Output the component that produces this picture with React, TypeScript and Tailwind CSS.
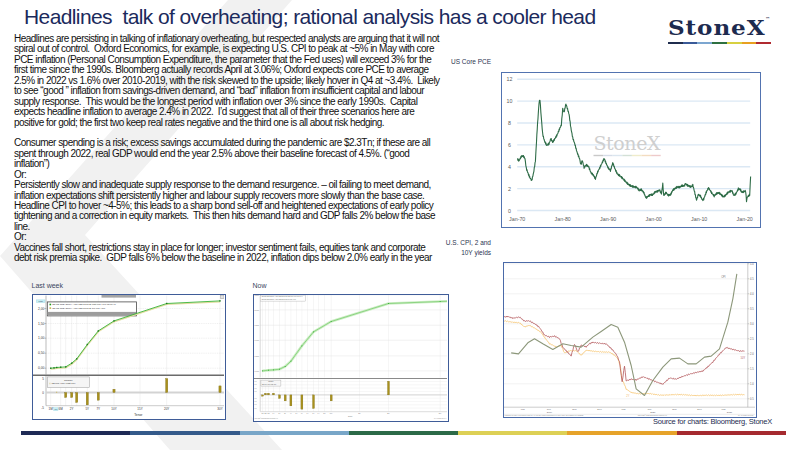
import React from "react";

const P1 = [
  "Headlines are persisting in talking of inflationary overheating, but respected analysts are arguing that it will not",
  "spiral out of control.  Oxford Economics, for example, is expecting U.S. CPI to peak at ~5% in May with core",
  "PCE inflation (Personal Consumption Expenditure, the parameter that the Fed uses) will exceed 3% for the",
  "first time since the 1990s. Bloomberg actually records April at 3.06%; Oxford expects core PCE to average",
  "2.5% in 2022 vs 1.6% over 2010-2019, with the risk skewed to the upside; likely hover in Q4 at ~3.4%.  Likely",
  "to see \u201cgood \u201d inflation from savings-driven demand, and \u201cbad\u201d inflation from insufficient capital and labour",
  "supply response.  This would be the longest period with inflation over 3% since the early 1990s.  Capital",
  "expects headline inflation to average 2.4% in 2022.  I\u2019d suggest that all of their three scenarios here are",
  "positive for gold; the first two keep real rates negative and the third one is all about risk hedging.",
  "",
  "Consumer spending is a risk; excess savings accumulated during the pandemic are $2.3Tn; if these are all",
  "spent through 2022, real GDP would end the year 2.5% above their baseline forecast of 4.5%. (\u201cgood",
  "inflation\u201d)",
  "Or:",
  "Persistently slow and inadequate supply response to the demand resurgence. \u2013 oil failing to meet demand,",
  "inflation expectations shift persistently higher and labour supply recovers more slowly than the base case.",
  "Headline CPI to hover ~4-5%; this leads to a sharp bond sell-off and heightened expectations of early policy",
  "tightening and a correction in equity markets.  This then hits demand hard and GDP falls 2% below the base",
  "line.",
  "Or:",
  "Vaccines fall short, restrictions stay in place for longer; investor sentiment fails, equities tank and corporate",
  "debt risk premia spike.  GDP falls 6% below the baseline in 2022, inflation dips below 2.0% early in the year",
];

// interpolate between key points and add a little deterministic noise
function jag(pts: number[][], step: number, amp: number, seed = 1) {
  const out: string[] = [];
  let k = 0;
  for (let i = 0; i < pts.length - 1; i++) {
    const [x0, y0] = pts[i];
    const [x1, y1] = pts[i + 1];
    const n = Math.max(1, Math.round(Math.abs(x1 - x0) / step));
    for (let j = 0; j < n; j++) {
      const t = j / n;
      const d = amp * (Math.sin(k * 2.7 + seed) + 0.6 * Math.sin(k * 6.1 + seed * 2));
      out.push(`${(x0 + (x1 - x0) * t).toFixed(2)},${(y0 + (y1 - y0) * t + d).toFixed(2)}`);
      k++;
    }
  }
  const last = pts[pts.length - 1];
  out.push(`${last[0]},${last[1]}`);
  return out.join(" ");
}

const PCE: number[][] = [
  [1970, 4.7], [1970.4, 4.5], [1970.9, 4.9], [1971.3, 5.0], [1971.7, 4.8], [1972.0, 3.9], [1972.5, 3.3],
  [1972.9, 2.9], [1973.2, 2.7], [1973.6, 3.4], [1974.0, 4.5], [1974.4, 7.5], [1974.8, 9.9], [1975.0, 10.2],
  [1975.3, 8.5], [1975.6, 7.0], [1976.0, 6.3], [1976.5, 5.9], [1977.0, 6.1], [1977.4, 6.6], [1977.8, 6.3],
  [1978.3, 6.6], [1978.8, 6.9], [1979.3, 7.4], [1979.7, 7.8], [1980.0, 9.3], [1980.3, 9.0], [1980.7, 9.8],
  [1981.0, 9.4], [1981.4, 8.8], [1981.8, 7.5], [1982.2, 6.6], [1982.7, 6.0], [1983.2, 5.3], [1983.7, 4.8],
  [1984.0, 4.2], [1984.3, 4.6], [1984.7, 3.9], [1985.2, 4.1], [1985.7, 4.0], [1986.2, 3.5], [1986.7, 3.3],
  [1987.2, 2.9], [1987.6, 3.4], [1988.2, 3.9], [1988.7, 4.4], [1989.1, 4.8], [1989.5, 4.4], [1990.0, 3.9],
  [1990.5, 3.6], [1991.0, 4.3], [1991.5, 3.8], [1992.0, 3.4], [1992.6, 3.2], [1993.2, 2.9], [1993.8, 2.6],
  [1994.4, 2.4], [1995.0, 2.3], [1995.6, 2.2], [1996.2, 2.1], [1996.8, 1.8], [1997.3, 1.9], [1997.8, 1.7],
  [1998.3, 1.2], [1998.8, 1.3], [1999.3, 1.4], [1999.8, 1.4], [2000.3, 1.7], [2000.8, 1.8], [2001.3, 1.9],
  [2001.7, 1.5], [2002.0, 2.4], [2002.2, 1.3], [2002.7, 1.6], [2003.2, 1.4], [2003.7, 1.5], [2004.2, 1.9],
  [2004.7, 2.0], [2005.2, 2.1], [2005.7, 2.1], [2006.2, 2.3], [2006.7, 2.3], [2007.0, 2.5], [2007.4, 2.3],
  [2007.8, 2.2], [2008.2, 2.1], [2008.6, 2.3], [2009.0, 1.7], [2009.4, 1.0], [2009.8, 1.5], [2010.3, 1.3],
  [2010.7, 0.9], [2011.0, 1.0], [2011.5, 1.6], [2012.0, 2.1], [2012.4, 1.9], [2012.8, 1.6], [2013.3, 1.3],
  [2013.8, 1.5], [2014.3, 1.6], [2014.8, 1.5], [2015.3, 1.3], [2015.8, 1.4], [2016.3, 1.6], [2016.8, 1.7],
  [2017.2, 1.8], [2017.6, 1.4], [2018.1, 1.6], [2018.6, 2.0], [2019.0, 1.9], [2019.4, 1.6], [2019.8, 1.7],
  [2020.2, 1.8], [2020.4, 0.9], [2020.6, 1.3], [2020.9, 1.4], [2021.1, 1.5], [2021.3, 3.1],
];

const pceLine = jag(
  PCE.map(([yr, v]) => [16.7 + (yr - 1970) * 4.55, 139 - v * 10.94]),
  0.4,
  0.9,
  3
);

function PceChart() {
  const ys = [12, 10, 8, 6, 4, 2, 0];
  const xl = ["Jan-70", "Jan-80", "Jan-90", "Jan-00", "Jan-10", "Jan-20"];
  const stripe = ["#c9c9c9", "#d6dde8", "#dbe6ef", "#d3e0d6", "#efeccb", "#f3dcc0", "#eecaca"];
  return (
    <svg width="257" height="153" viewBox="1.5 1.5 257 153" className="block">
      {ys.map((v) => (
        <g key={v}>
          <line x1="16.7" x2="249.7" y1={139 - v * 10.94} y2={139 - v * 10.94} stroke="#dbe8f4" strokeWidth="1.4" />
          <text x="9" y={141 - v * 10.94} fontSize="5.3" fill="#5a5a5a" textAnchor="middle" fontFamily="Liberation Sans">{v}</text>
        </g>
      ))}
      {xl.map((l, i) => (
        <text key={l} x={16.7 + i * 45.5} y="149.5" fontSize="5.3" fill="#5a5a5a" textAnchor="middle" fontFamily="Liberation Sans">{l}</text>
      ))}
      <text x="93" y="78" fontSize="19" fill="#cfcfcf" textLength="67" fontFamily="DejaVu Serif">StoneX</text>
      {stripe.map((c, i) => (
        <rect key={i} x={93 + i * 9.6} y="83.3" width="9.6" height="1.4" fill={c} />
      ))}
      <polyline points={pceLine} fill="none" stroke="#2e6c47" strokeWidth="1.1" strokeLinejoin="round" />
    </svg>
  );
}

const cv = (p: number[][]) => p.map(([X, Y]) => [X / 3 - 3, Y / 3 - 6]);

const CPI = cv([[35,292],[57,295],[85,262],[105,250],[130,265],[160,282],[190,265],[215,270],[245,275],[280,245],[305,228],[335,207],[355,215],[375,260],[395,330],[410,400],[435,420],[460,375],[490,335],[515,310],[540,308],[565,325],[590,325],[615,305],[635,302],[660,280],[685,200],[700,130],[712,55]]);
const TEN = cv([[0,190],[10,185],[25,182],[40,187],[60,185],[75,198],[90,197],[110,207],[120,215],[135,238],[150,245],[165,243],[180,250],[190,275],[205,290],[215,300],[225,265],[235,290],[245,270],[260,275],[270,265],[280,260],[300,262],[320,265],[340,285],[352,300],[360,320],[368,380],[375,330],[380,375],[395,370],[410,373],[430,365],[445,370],[460,375],[490,385],[510,368],[530,372],[550,363],[570,355],[590,350],[610,347],[625,335],[640,320],[660,295],[680,275],[700,282],[720,288],[735,287]]);
const TWO = cv([[0,205],[10,195],[30,198],[60,202],[75,215],[90,210],[110,220],[125,230],[135,245],[150,265],[170,275],[185,270],[195,292],[210,285],[230,285],[245,300],[260,285],[280,287],[300,288],[330,290],[345,300],[355,310],[362,330],[368,375],[372,380],[380,400],[395,410],[420,415],[450,415],[480,418],[520,418],[560,418],[600,420],[640,420],[680,418],[710,418],[735,418]]);

function CpiChart() {
  const grid = [0, 1, 2, 3, 4, 5, 6, 7, 8, 9];
  const vals = ["5.0", "4.5", "4.0", "3.5", "3.0", "2.5", "2.0", "1.5", "1.0", "0.5"];
  const months = [[20.3, "Mar"], [46.3, "Jun"], [72, "Sep"], [97, "Dec"], [121, "Mar"], [147, "Jun"], [172, "Sep"], [197, "Dec"], [221, "Mar"]] as const;
  return (
    <svg width="251" height="153" viewBox="1.5 1.5 251 153" className="block">
      {grid.map((k) => (
        <g key={k}>
          <line x1="0" x2="245.3" y1={2.3 + k * 15} y2={2.3 + k * 15} stroke="#e4e4e4" strokeWidth="0.5" />
          <line x1="245.3" x2="246.8" y1={2.3 + k * 15} y2={2.3 + k * 15} stroke="#888" strokeWidth="0.4" />
          <text x="247.5" y={3.3 + k * 15} fontSize="2.6" fill="#666" fontFamily="Liberation Sans">{vals[k]}</text>
        </g>
      ))}
      <line x1="245.3" x2="245.3" y1="0" y2="145.7" stroke="#999" strokeWidth="0.5" />
      <line x1="0" x2="253" y1="145.7" y2="145.7" stroke="#999" strokeWidth="0.5" />
      {months.map(([x, m], i) => (
        <text key={i} x={x} y="148.8" fontSize="2.4" fill="#666" textAnchor="middle" fontFamily="Liberation Sans">{m}</text>
      ))}
      <text x="47" y="151.6" fontSize="2.4" fill="#666" textAnchor="middle" fontFamily="Liberation Sans">2019</text>
      <text x="150.3" y="151.6" fontSize="2.4" fill="#666" textAnchor="middle" fontFamily="Liberation Sans">2020</text>
      <text x="227" y="151.6" fontSize="2.4" fill="#666" textAnchor="middle" fontFamily="Liberation Sans">2021</text>
      <line x1="0" x2="253" y1="152.8" y2="152.8" stroke="#bbb" strokeWidth="0.3" />
      <text x="2" y="154.6" fontSize="1.6" fill="#888" fontFamily="Liberation Sans">USGG10YR Index (US Generic Govt 10 Yr) US CPI Urban Consumers YoY NSA Daily 02APR2019-06APR2021</text>
      <text x="150" y="154.6" fontSize="1.6" fill="#888" textAnchor="middle" fontFamily="Liberation Sans">Copyright© 2021 Bloomberg Finance L.P.</text>
      <text x="251" y="154.6" fontSize="1.6" fill="#888" textAnchor="end" fontFamily="Liberation Sans">06-Apr-2021 08:01:51</text>
      <polyline points={jag(TWO, 0.9, 0.45, 5)} fill="none" stroke="#f6c46e" strokeWidth="0.8" strokeLinejoin="round" />
      <polyline points={jag(TEN, 0.9, 0.6, 2)} fill="none" stroke="#b4585c" strokeWidth="0.8" strokeLinejoin="round" />
      <polyline points={CPI.map((p) => p.join(",")).join(" ")} fill="none" stroke="#8c977a" strokeWidth="1.1" strokeLinejoin="round" />
      <text x="218.7" y="16.5" fontSize="2.6" fill="#777" fontFamily="Liberation Sans">CPI</text>
      <text x="238" y="97" fontSize="2.6" fill="#b4585c" fontFamily="Liberation Sans">10Y</text>
      <text x="123.7" y="135.5" fontSize="2.6" fill="#f0b860" fontFamily="Liberation Sans">2Y</text>
    </svg>
  );
}

function LastWeekChart() {
  const cx = [19.2, 22.5, 25.2, 29.2, 34.2, 40.2, 45.2, 55.8, 66.8, 82.5, 135.2, 188.5];
  const cy = [74.7, 74.4, 74.0, 73.7, 73.4, 69.7, 65.4, 51.0, 37.4, 27.4, 10.0, 7.4];
  const vgrid = [19.2, 29.2, 34.2, 40.2, 45.2, 55.8, 66.8, 82.5, 108.5, 135.2, 188.5];
  const hy = [[15, "2,00"], [30, "1,50"], [44.7, "1,00"], [59.7, "0,50"], [74.7, "0,00"]] as const;
  const bars = [[34.2, 104], [40.2, 104], [45.2, 109], [55.8, 111.4], [66.8, 106.7], [82.5, 95.7], [135.2, 85], [188.5, 92.4]];
  const xl = [[19.2, "1M"], [29.2, "6M"], [40.2, "2Y"], [55.8, "5Y"], [66.8, "7Y"], [82.5, "10Y"], [108.5, "15Y"], [135.2, "20Y"], [188.5, "30Y"]] as const;
  const pts = cx.map((x, i) => `${x},${cy[i]}`).join(" ");
  const pts1w = cx.map((x, i) => `${x},${cy[i] + 0.9}`).join(" ");
  return (
    <svg width="191" height="123" viewBox="1.5 1.5 191 123" className="block">
      {vgrid.map((x) => (
        <g key={x}>
          <line x1={x} x2={x} y1="2" y2="81" stroke="#e6e6e6" strokeWidth="0.5" />
          <line x1={x} x2={x} y1="83" y2="112" stroke="#e6e6e6" strokeWidth="0.5" />
        </g>
      ))}
      {hy.map(([y, l]) => (
        <g key={l}>
          <line x1="14.5" x2="194" y1={y} y2={y} stroke="#d6d6d6" strokeWidth="0.4" strokeDasharray="1 0.8" />
          <line x1="13" x2="14.5" y1={y} y2={y} stroke="#666" strokeWidth="0.4" />
          <text x="12.8" y={y + 1.1} fontSize="3.2" fill="#333" textAnchor="end" fontFamily="Liberation Sans">{l}</text>
        </g>
      ))}
      <line x1="14.5" x2="14.5" y1="2" y2="81" stroke="#777" strokeWidth="0.5" />
      <rect x="70" y="0.8" width="34.5" height="3.3" fill="#a5a5a5" />
      <rect x="189" y="1.6" width="3.5" height="3.5" fill="#e2e2e2" stroke="#888" strokeWidth="0.4" />
      <rect x="5" y="6.4" width="8.5" height="2.6" fill="#c9eff6" stroke="#77c7d6" strokeWidth="0.3" />
      <text x="9.2" y="8.4" fontSize="1.8" fill="#356" textAnchor="middle" fontFamily="Liberation Sans">2,226</text>
      <rect x="15.8" y="8.4" width="89.2" height="14" fill="#fff" stroke="#4a4a4a" strokeWidth="0.8" />
      <rect x="16.2" y="18.4" width="88.4" height="3.6" fill="#9c9c9c" />
      <rect x="18" y="10.2" width="1.6" height="1.6" fill="#1b9a1b" />
      <text x="20.6" y="11.7" fontSize="2.3" fill="#333" fontFamily="Liberation Sans">I25 US TREASURY ACTIVES CURVE Last Mid YTW 08:06:46</text>
      <rect x="18" y="13.8" width="1.6" height="1.6" fill="#c8b24a" />
      <text x="20.6" y="15.3" fontSize="2.3" fill="#333" fontFamily="Liberation Sans">I25 US TREASURY ACTIVES CURVE 1W Mid YTW</text>
      <polyline points={pts1w} fill="none" stroke="#e2dca0" strokeWidth="1.3" />
      <polyline points={pts} fill="none" stroke="#39b339" strokeWidth="0.9" />
      {cx.map((x, i) => (
        <rect key={i} x={x - 0.7} y={cy[i] - 0.7} width="1.4" height="1.4" fill="#1e7a1e" />
      ))}
      <line x1="0" x2="196" y1="81.7" y2="81.7" stroke="#6b6b6b" strokeWidth="1.4" />
      <line x1="14.5" x2="14.5" y1="82.5" y2="112.2" stroke="#777" strokeWidth="0.5" />
      <line x1="14.5" x2="194" y1="99" y2="99" stroke="#d3d3d3" strokeWidth="1.8" />
      <text x="12.5" y="86.5" fontSize="3" fill="#333" textAnchor="end" fontFamily="Liberation Sans">5</text>
      <text x="12.5" y="100" fontSize="3" fill="#333" textAnchor="end" fontFamily="Liberation Sans">0</text>
      <text x="12.5" y="115" fontSize="3" fill="#333" textAnchor="end" fontFamily="Liberation Sans">-5</text>
      <rect x="24.5" y="98.3" width="1.2" height="0.8" fill="#c9b24a" />
      {bars.map(([x, y]) => (
        <rect key={x} x={x - 1.1} y={Math.min(99, y)} width="2.2" height={Math.abs(y - 99)} fill="#a8901c" stroke="#75650f" strokeWidth="0.3" />
      ))}
      <rect x="15.8" y="83.4" width="42" height="10.6" fill="#f5f5f5" stroke="#9a9a9a" strokeWidth="0.5" />
      <text x="36.8" y="87.2" fontSize="2.4" fill="#333" textAnchor="middle" fontFamily="Liberation Sans">Change</text>
      <rect x="17.5" y="89.2" width="1.6" height="1.6" fill="#e6e2c0" />
      <text x="20" y="90.7" fontSize="2.3" fill="#333" fontFamily="Liberation Sans">I25 Mid YTW (Last-1W)</text>
      <line x1="14.5" x2="194" y1="112.2" y2="112.2" stroke="#999" strokeWidth="0.5" />
      {xl.map(([x, l]) => (
        <text key={l} x={x} y="116.6" fontSize="3" fill="#333" textAnchor="middle" fontFamily="Liberation Sans">{l}</text>
      ))}
      <rect x="22.2" y="114.3" width="4.4" height="2.7" fill="#c9eff6" stroke="#77c7d6" strokeWidth="0.3" />
      <text x="24.4" y="116.3" fontSize="1.9" fill="#356" textAnchor="middle" fontFamily="Liberation Sans">3M</text>
      <text x="106.8" y="122.4" fontSize="3.3" fill="#333" textAnchor="middle" fontFamily="Liberation Sans">Tenor</text>
    </svg>
  );
}

function NowChart() {
  const cx = [10, 16, 21, 27, 32.7, 38.4, 49.4, 61, 78.7, 136, 187.7, 196];
  const cy = [77.4, 76.7, 76.4, 75.7, 73, 67.7, 52.4, 38.4, 28, 10, 8, 7.7];
  const vgrid = [10, 13, 16, 21, 27, 32.7, 38.4, 44, 49.4, 55, 61, 66, 72, 78.7, 107, 136, 187.7];
  const hy = [[1.4, "2,500"], [16.4, "2,000"], [31.7, "1,500"], [46.7, "1,000"], [62.4, "0,500"], [77.4, "0,000"]] as const;
  const bars = [[10, 102.7], [13, 99.7], [16, 99.7], [21, 99.7], [27, 105], [32.7, 107.4], [38.4, 112.4], [49.4, 115.7], [61, 115], [78.7, 107.4], [136, 87.7]];
  const xl = ["1M", "3M", "6M", "1Y", "2Y", "3Y", "4Y", "5Y", "6Y", "7Y", "8Y", "9Y", "10Y", "10Y", "15Y", "20Y", "30Y"];
  const pts = cx.map((x, i) => `${x},${cy[i]}`).join(" ");
  return (
    <svg width="193.4" height="125" viewBox="1.5 1.5 193.4 125" className="block">
      {vgrid.map((x) => (
        <g key={x}>
          <line x1={x} x2={x} y1="1" y2="84" stroke="#ececec" strokeWidth="0.5" />
          <line x1={x} x2={x} y1="86" y2="118" stroke="#ececec" strokeWidth="0.5" />
        </g>
      ))}
      {hy.map(([y, l]) => (
        <g key={l}>
          <line x1="7.7" x2="196" y1={y} y2={y} stroke="#e2e2e2" strokeWidth="0.5" />
          <text x="2" y={y + 0.7} fontSize="1.8" fill="#777" fontFamily="Liberation Sans">{l}</text>
        </g>
      ))}
      <line x1="7.7" x2="7.7" y1="0" y2="84" stroke="#999" strokeWidth="0.4" />
      <rect x="7.7" y="1.6" width="45" height="6" fill="#fff" stroke="#aaa" strokeWidth="0.4" />
      <text x="9" y="4" fontSize="1.5" fill="#666" fontFamily="Liberation Sans">I25 US TREASURY ACTIVES CURVE Last Mid YTW 08:41:44</text>
      <text x="9" y="6.4" fontSize="1.5" fill="#666" fontFamily="Liberation Sans">I25 US TREASURY ACTIVES CURVE 1W Mid YTW</text>
      <polyline points={pts} fill="none" stroke="#cdeec5" strokeWidth="2.6" />
      <polyline points={pts} fill="none" stroke="#84d07a" strokeWidth="0.9" />
      {cx.slice(0, 11).map((x, i) => (
        <rect key={i} x={x - 0.5} y={cy[i] - 0.5} width="1" height="1" fill="#3faf3f" />
      ))}
      <line x1="0" x2="197" y1="85" y2="85" stroke="#8a8a8a" strokeWidth="1.2" />
      {[88, 91.3, 94.6, 98, 104.7, 108, 111.3, 114.6].map((y) => (
        <g key={y}>
          <line x1="7.7" x2="196" y1={y} y2={y} stroke="#ececec" strokeWidth="0.4" />
          <text x="2" y={y + 0.6} fontSize="1.5" fill="#777" fontFamily="Liberation Sans">0,0</text>
        </g>
      ))}
      <line x1="7.7" x2="196" y1="101.4" y2="101.4" stroke="#c8c8c8" strokeWidth="0.8" />
      <line x1="7.7" x2="7.7" y1="86" y2="118" stroke="#999" strokeWidth="0.4" />
      {bars.map(([x, y]) => (
        <rect key={x} x={x - 1} y={Math.min(101.4, y)} width="2" height={Math.max(0.8, Math.abs(y - 101.4))} fill="#a8901c" stroke="#75650f" strokeWidth="0.25" />
      ))}
      <rect x="8.4" y="86.6" width="20" height="6" fill="#f6f6f6" stroke="#aaa" strokeWidth="0.4" />
      <text x="18.4" y="88.9" fontSize="1.5" fill="#555" textAnchor="middle" fontFamily="Liberation Sans">Change</text>
      <text x="9.4" y="91.4" fontSize="1.4" fill="#555" fontFamily="Liberation Sans">I25 Mid YTW (Last-1W)</text>
      <line x1="7.7" x2="196" y1="118.2" y2="118.2" stroke="#aaa" strokeWidth="0.4" />
      {vgrid.map((x, i) => (
        <text key={x} x={x} y="120.8" fontSize="1.5" fill="#666" textAnchor="middle" fontFamily="Liberation Sans">{xl[i]}</text>
      ))}
      <text x="97.7" y="123.8" fontSize="1.8" fill="#666" textAnchor="middle" fontFamily="Liberation Sans">Tenor</text>
      <text x="2" y="126" fontSize="1.3" fill="#888" fontFamily="Liberation Sans">Copyright© 2021 Bloomberg Finance L.P.</text>
      <text x="194" y="126" fontSize="1.3" fill="#888" textAnchor="end" fontFamily="Liberation Sans">06-Apr-2021 08:41:44</text>
    </svg>
  );
}

export default function App() {
  return (
    <div className="relative w-[800px] h-[450px] overflow-hidden bg-white font-['Liberation_Sans',Arial,sans-serif]">
      {/* faint chevron from the slide master */}
      <svg className="absolute inset-0" width="800" height="450" viewBox="0 0 800 450">
        <polygon points="228,0 292,0 85,235 282,450 170,450 0,256" fill="#f1f1f1" />
      </svg>

      <div className="relative flex flex-col h-full">
        {/* Title + logo */}
        <div className="flex h-[34px] items-start">
          <h1 className="pl-[24px] pt-[5px] text-[21px] leading-[24px] tracking-[-0.6px] text-[#1b2a5c] whitespace-pre">
            Headlines  talk of overheating; rational analysis has a cooler head
          </h1>
          <div className="ml-auto mr-[29px] pt-[17px] w-[103px] flex flex-col shrink-0">
            <div className="origin-left scale-x-[1.1] font-['DejaVu_Serif',serif] font-bold text-[21px] leading-[21px] tracking-[0.8px] text-[#1d2b4f] whitespace-nowrap">
              StoneX<span className="align-top text-[4px] leading-none tracking-normal">™</span>
            </div>
            <div className="mt-[4px] flex h-[2px]">
              <div className="flex-1 bg-[#1f2d4e]" />
              <div className="flex-1 bg-[#3a5a98]" />
              <div className="flex-1 bg-[#7ca6d0]" />
              <div className="flex-1 bg-[#2e7040]" />
              <div className="flex-1 bg-[#d7d040]" />
              <div className="flex-1 bg-[#e8a020]" />
              <div className="flex-1 bg-[#b02a30]" />
            </div>
          </div>
        </div>

        <div className="flex h-[397px]">
          {/* Left: commentary + curve charts */}
          <div className="w-[443px] shrink-0 pl-[14px]">
            <div className="text-[10px] leading-[10.45px] tracking-[-0.53px] text-[#111] whitespace-pre">
              {P1.map((l, i) => (
                <div key={i} className="h-[10.45px]">{l || "\u00a0"}</div>
              ))}
            </div>
            <div className="mt-[17px] ml-[17.5px] flex gap-[27px]">
              <div className="flex flex-col">
                <span className="text-[7px] leading-[9px] text-[#3b4660]">Last week</span>
                <div className="mt-[4px] w-[194px] h-[126px] border-[1.5px] border-[#3f5c98] bg-white overflow-hidden">
                  <LastWeekChart />
                </div>
              </div>
              <div className="flex flex-col">
                <span className="text-[7px] leading-[9px] text-[#3b4660]">Now</span>
                <div className="mt-[4px] w-[196.4px] h-[128px] border-[1.5px] border-[#3f5c98] bg-white overflow-hidden">
                  <NowChart />
                </div>
              </div>
            </div>
          </div>

          {/* Right: PCE and CPI charts */}
          <div className="flex-1 flex flex-col">
            <span className="ml-[8px] mt-[24px] text-[6.5px] leading-[8px] text-[#2a3550]">US Core PCE</span>
            <div className="mt-[6px] ml-[58px] w-[260px] h-[156px] border-[1.5px] border-[#5273b0] bg-white overflow-hidden">
              <PceChart />
            </div>
            <div className="mt-[10px] w-[48px] text-right text-[6.5px] leading-[10px] text-[#2a3550]">
              <div>U.S. CPI, 2 and</div>
              <div>10Y yields</div>
            </div>
            <div className="mt-[3.5px] ml-[60px] w-[254px] h-[156px] border-[1.5px] border-[#4a6aa8] bg-white overflow-hidden">
              <CpiChart />
            </div>
            <span className="ml-[210px] text-[7.5px] leading-[8px] tracking-[-0.2px] text-[#1d2b4f] whitespace-nowrap">
              Source for charts: Bloomberg, StoneX
            </span>
          </div>
        </div>

        {/* colour bar */}
        <div className="ml-[21px] w-[765px] h-[4px] flex">
          <div className="flex-1 bg-[#1e2a55]" />
          <div className="flex-1 bg-[#345a8a]" />
          <div className="flex-1 bg-[#78a6c8]" />
          <div className="flex-1 bg-[#2c6a48]" />
          <div className="flex-1 bg-[#ddd055]" />
          <div className="flex-1 bg-[#e6a32a]" />
          <div className="flex-1 bg-[#a52a2f]" />
        </div>
      </div>
    </div>
  );
}
